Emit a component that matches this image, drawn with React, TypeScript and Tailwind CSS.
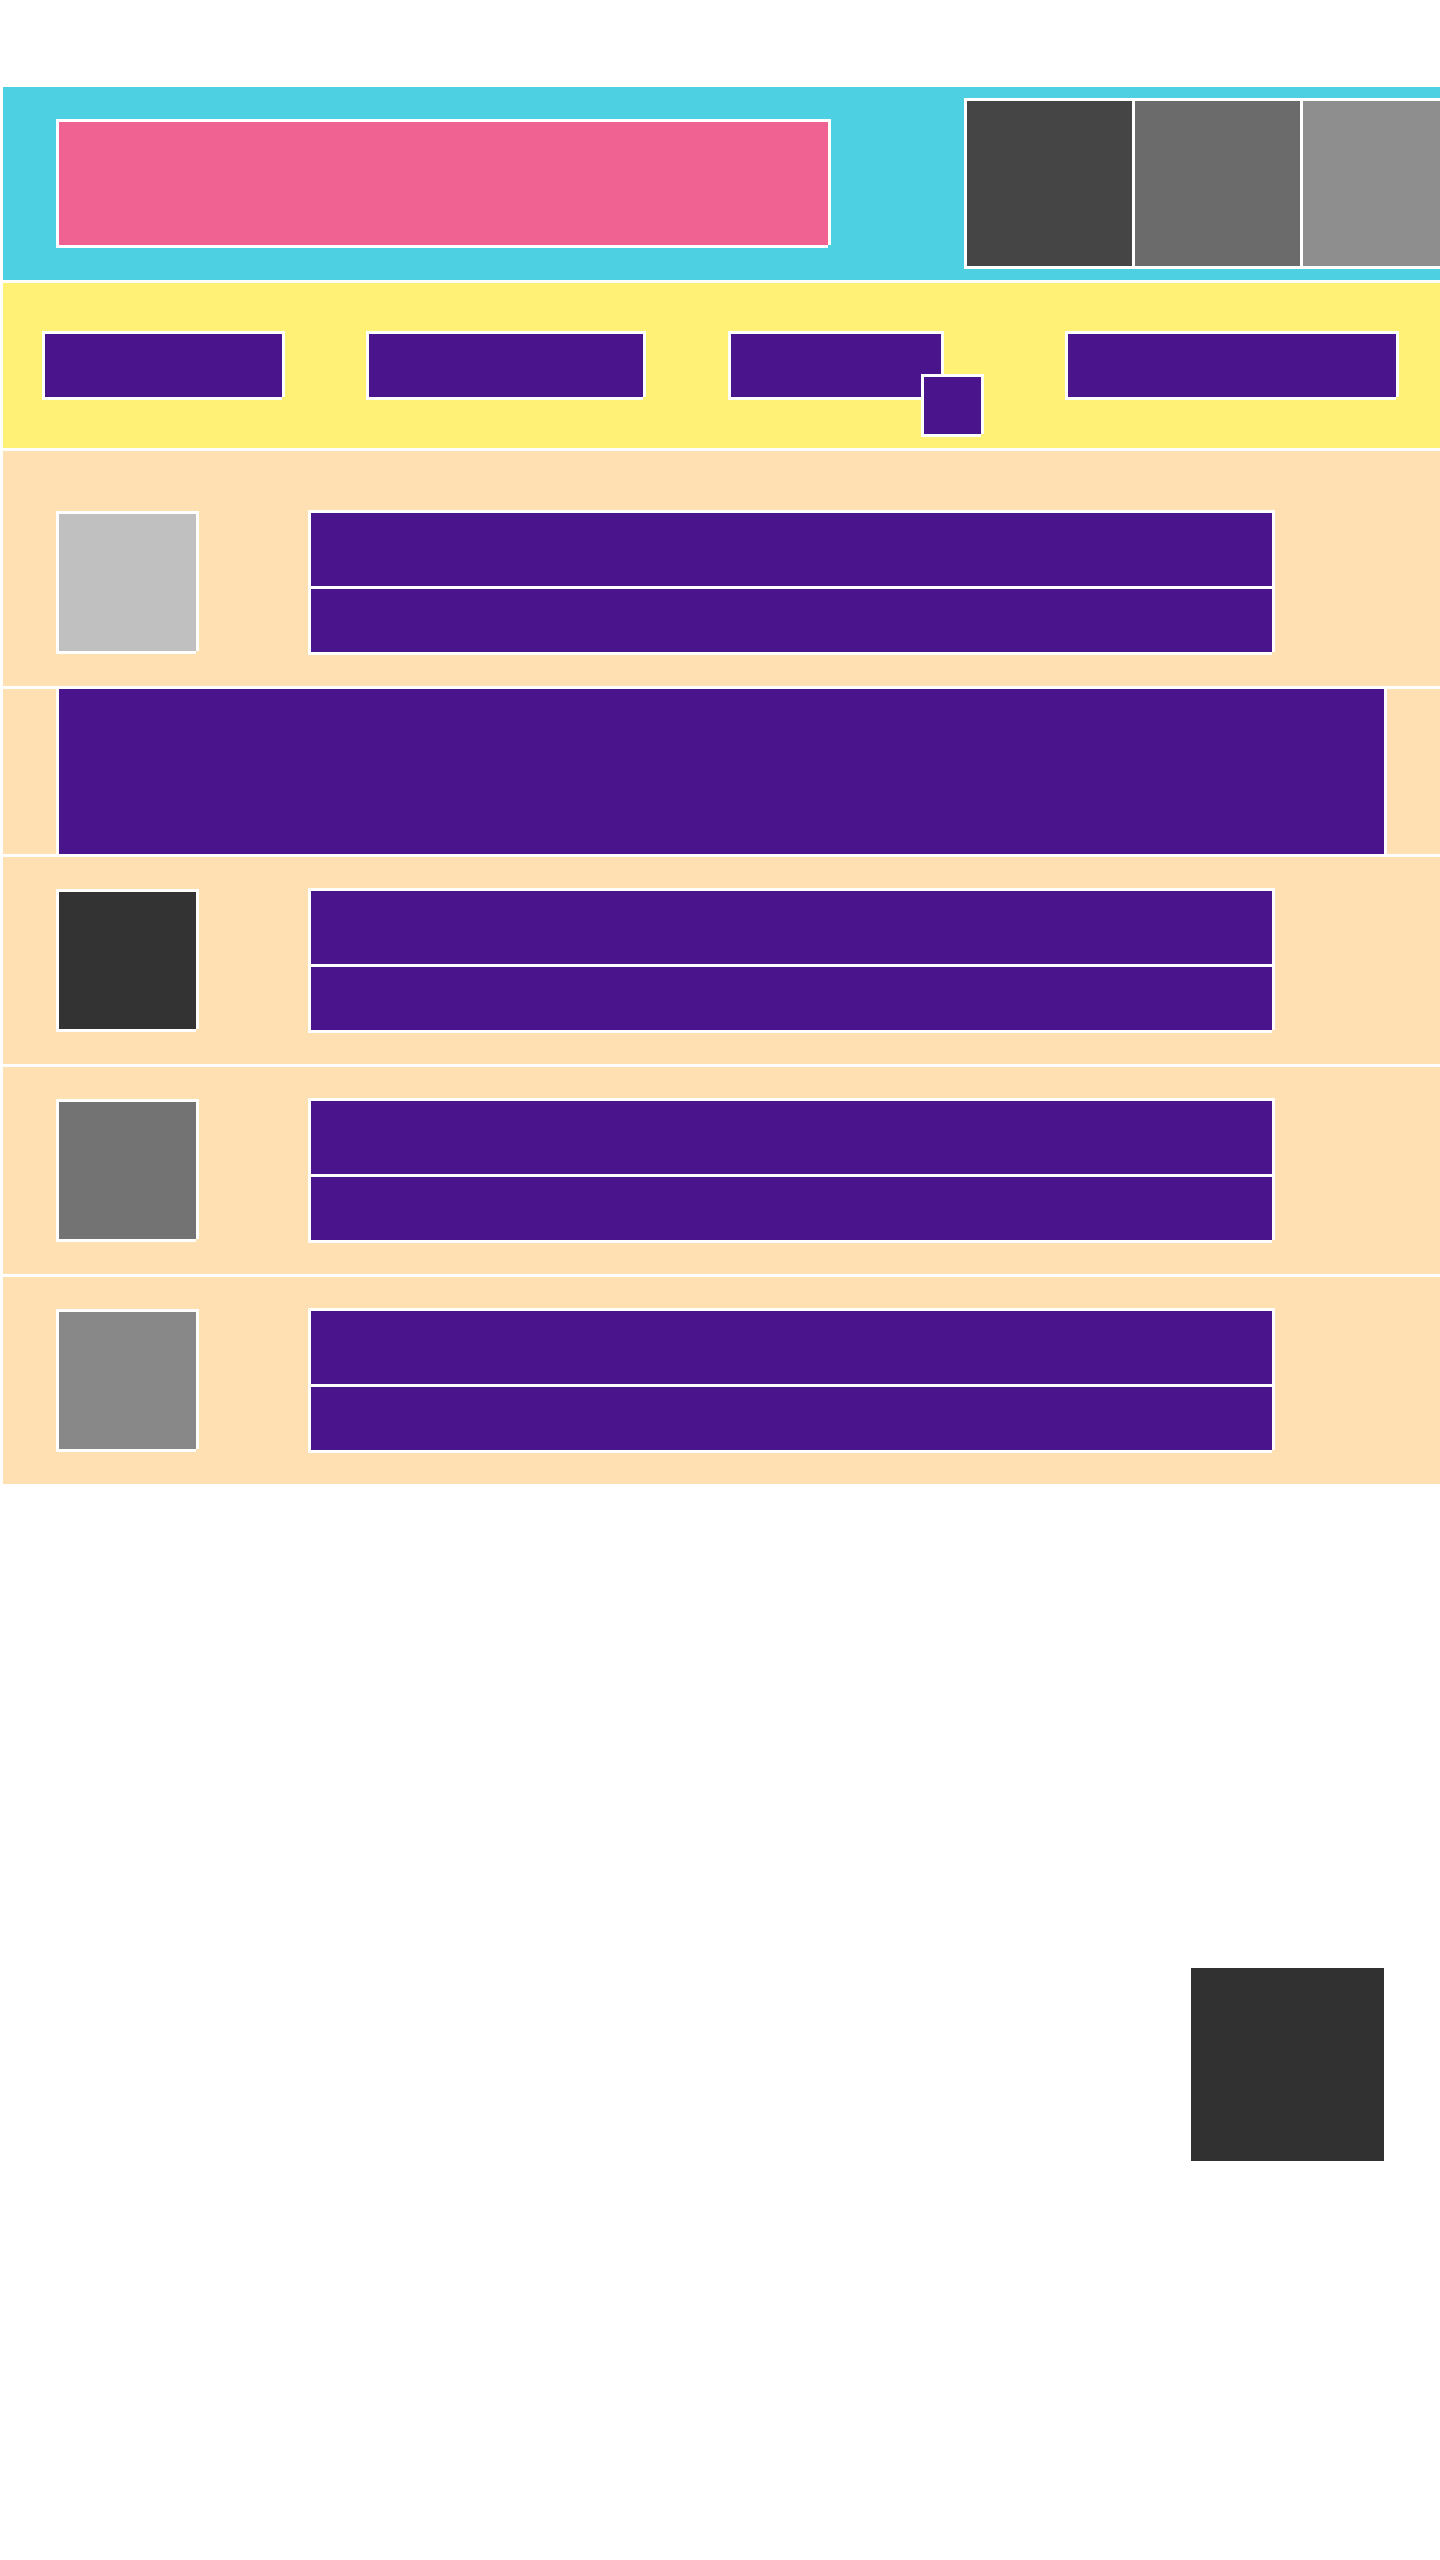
import React from 'react';

// white frame drawn round a block, open at the bottom-right corner
const frame = "shadow-[-3px_-3px_0_#fff,3px_-3px_0_#fff,-3px_3px_0_#fff,3px_0_0_#fff,0_3px_0_#fff]";

type RowProps = {
    thumb: string;
    first?: boolean;
};

const ListRow = ({ thumb, first }: RowProps) => {
    return (
        <div className={`flex items-center bg-[#ffe0b2] pl-[56px] ${first ? "pt-[62px] pb-[34px]" : "py-[34px]"}`}>
            <div className={`w-[137px] h-[137px] ${frame}`} style={{ backgroundColor: thumb }} />
            <div className={`ml-[115px] w-[961px] flex flex-col gap-[3px] bg-white ${frame}`}>
                <div className="h-[73px] bg-[#4a148c]" />
                <div className="h-[63px] bg-[#4a148c]" />
            </div>
        </div>
    );
};

export default function App() {
    return (
        <div className="min-h-[2560px] w-[1440px] overflow-hidden bg-white pl-[3px] pt-[87px]">
            <div className="flex flex-col gap-[3px]">
                {/* header */}
                <div className="flex items-start h-[193px] bg-[#4dd0e1]">
                    <div className={`ml-[56px] mt-[35px] w-[769px] h-[123px] shrink-0 bg-[#f06292] ${frame}`} />
                    <div className="ml-[136px] mt-[11px] flex shrink-0 gap-[3px] bg-white p-[3px]">
                        <div className="w-[165px] h-[165px] bg-[#454545]" />
                        <div className="w-[165px] h-[165px] bg-[#6b6b6b]" />
                        <div className="w-[165px] h-[165px] bg-[#8e8e8e]" />
                    </div>
                </div>

                {/* nav */}
                <div className="flex items-center h-[165px] bg-[#fff176]">
                    <div className={`ml-[42px] w-[237px] h-[63px] bg-[#4a148c] ${frame}`} />
                    <div className={`ml-[87px] w-[274px] h-[63px] bg-[#4a148c] ${frame}`} />
                    <div className={`relative ml-[88px] w-[210px] h-[63px] bg-[#4a148c] ${frame}`}>
                        <div className={`absolute left-[193px] top-[43px] w-[57px] h-[57px] bg-[#4a148c] ${frame}`} />
                    </div>
                    <div className={`ml-[127px] w-[328px] h-[63px] bg-[#4a148c] ${frame}`} />
                </div>

                <ListRow thumb="#c0c0c0" first />

                <div className="h-[165px] bg-[#ffe0b2] pl-[53px]">
                    <div className="w-[1331px] h-full bg-[#4a148c] border-x-[3px] border-white" />
                </div>

                <ListRow thumb="#333333" />
                <ListRow thumb="#737373" />
                <ListRow thumb="#888888" />
            </div>

            <div className="flex justify-end pr-[56px] mt-[484px]">
                <div className="w-[193px] h-[193px] bg-[#313131]" />
            </div>
        </div>
    );
}
